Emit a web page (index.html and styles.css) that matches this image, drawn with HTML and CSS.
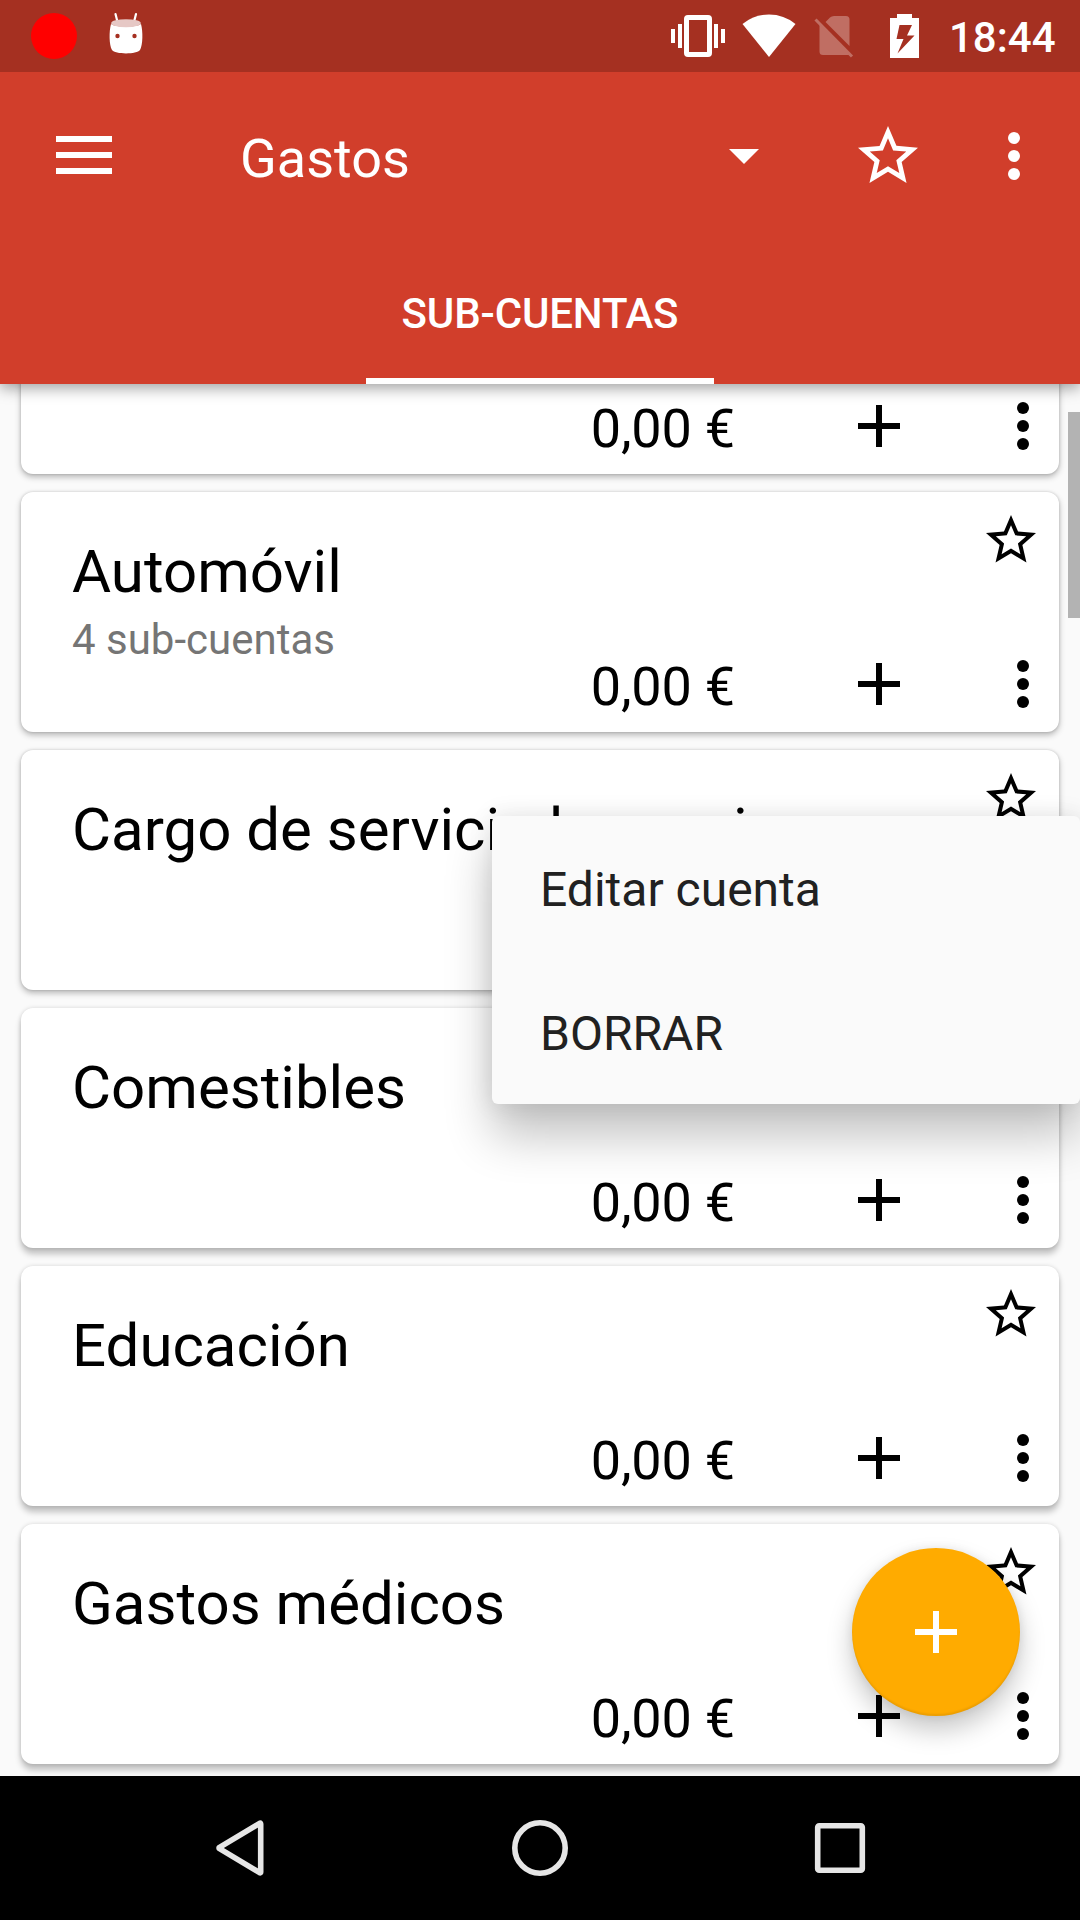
FILE: index.html
```html
<!DOCTYPE html>
<html lang="es">
<head>
<meta charset="utf-8">
<title>Gastos</title>
<link rel="stylesheet" href="styles.css">
</head>
<body>
<svg class="defs" width="0" height="0" aria-hidden="true">
  <symbol id="star" viewBox="0 0 24 24"><path d="M22 9.24l-7.19-.62L12 2 9.19 8.63 2 9.24l5.46 4.73L5.82 21 12 17.27 18.18 21l-1.63-7.03L22 9.24zM12 15.4l-3.76 2.27 1-4.28-3.32-2.88 4.38-.38L12 6.1l1.71 4.04 4.38.38-3.32 2.88 1 4.28L12 15.4z"/></symbol>
  <symbol id="plus" viewBox="0 0 24 24"><path d="M19 13h-6v6h-2v-6H5v-2h6V5h2v6h6v2z"/></symbol>
  <symbol id="more" viewBox="0 0 24 24"><circle cx="12" cy="6" r="2"/><circle cx="12" cy="12" r="2"/><circle cx="12" cy="18" r="2"/></symbol>
</svg>
<div class="screen">
  <header class="header">
    <div class="status">
      <svg class="record" viewBox="0 0 46 46"><circle cx="23" cy="23" r="23"/></svg>
      <svg class="robot" viewBox="0 0 36 44">
        <path d="M7.500 3l2 8M28 3l-2 8" stroke="#fff" stroke-width="2.2" stroke-linecap="round"/>
        <path d="M3 13C1 20 1 34 4 39C7 43.500 29 43.500 32 39C35 34 35 20 33 13C28 16.500 8 16.500 3 13z" fill="#fff"/>
        <ellipse cx="18" cy="12.200" rx="14.800" ry="4" fill="#e6c8c5"/>
        <circle cx="9.500" cy="25" r="2.200" fill="#a53021"/><circle cx="26.500" cy="25" r="2.200" fill="#a53021"/>
      </svg>
      <div class="status-right">
        <svg class="vibrate" viewBox="0 0 54 42" fill="#fff">
          <path d="M0 14h4v14H0zM7 9h4v24H7zM43 9h4v24h-4zM50 14h4v14h-4z"/>
          <path fill-rule="evenodd" d="M17 0h20q4 0 4 4v34q0 4-4 4H17q-4 0-4-4V4q0-4 4-4zM18 5v32h18V5z"/>
        </svg>
        <svg class="wifi" viewBox="0 0 54 44"><path fill="#fff" d="M.5 10Q12 .5 27 .5T53.500 10L27 43z"/></svg>
        <svg class="nosim" viewBox="0 0 40 42"><path fill="#c06e63" d="M11.500 6L16 1.500Q17.500 0 20 0h12q3.500 0 3.500 3.500V30zM5.500 8L36 38.500Q34.500 39 33 39H9q-3.500 0-3.500-3.500z"/><path d="M1.500 3.500L38 40.500" stroke="#c06e63" stroke-width="3"/></svg>
        <svg class="battery" viewBox="0 0 29 44"><path fill="#fff" fill-rule="evenodd" d="M7 0h15v4h7v40H0V4h7zM9.500 11L6.500 25h7L7.500 39.500L24.500 21.500h-7.500L22 11z"/></svg>
        <span class="clock">18:44</span>
      </div>
    </div>
    <div class="toolbar">
      <svg class="burger" viewBox="0 0 56 38" fill="#fff"><path d="M0 0h56v6H0zM0 16h56v6H0zM0 32h56v6H0z"/></svg>
      <h1 class="title">Gastos</h1>
      <svg class="caret" viewBox="0 0 30 15" fill="#fff"><path d="M0 0h30L15 15z"/></svg>
      <svg class="icon tool-star"><use href="#star"/></svg>
      <svg class="icon tool-more"><use href="#more"/></svg>
    </div>
    <div class="tabs"><div class="tab">SUB-CUENTAS</div></div>
  </header>
  <main class="list">
    <article class="card">
      <div class="balance"><span class="amount">0,00 €</span><svg class="icon"><use href="#plus"/></svg><svg class="icon"><use href="#more"/></svg></div>
    </article>
    <article class="card">
      <div class="top"><div><h2 class="name">Automóvil</h2><p class="sub">4 sub-cuentas</p></div><svg class="fav"><use href="#star"/></svg></div>
      <div class="balance"><span class="amount">0,00 €</span><svg class="icon"><use href="#plus"/></svg><svg class="icon"><use href="#more"/></svg></div>
    </article>
    <article class="card">
      <div class="top"><h2 class="name">Cargo de servicio bancario</h2><svg class="fav"><use href="#star"/></svg></div>
    </article>
    <article class="card low">
      <div class="top"><h2 class="name">Comestibles</h2></div>
      <div class="balance"><span class="amount">0,00 €</span><svg class="icon"><use href="#plus"/></svg><svg class="icon"><use href="#more"/></svg></div>
    </article>
    <article class="card low">
      <div class="top"><h2 class="name">Educación</h2><svg class="fav"><use href="#star"/></svg></div>
      <div class="balance"><span class="amount">0,00 €</span><svg class="icon"><use href="#plus"/></svg><svg class="icon"><use href="#more"/></svg></div>
    </article>
    <article class="card low">
      <div class="top"><h2 class="name">Gastos médicos</h2><svg class="fav"><use href="#star"/></svg></div>
      <div class="balance"><span class="amount">0,00 €</span><svg class="icon"><use href="#plus"/></svg><svg class="icon"><use href="#more"/></svg></div>
    </article>
    <div class="scrollbar"></div>
    <div class="menu"><div class="item">Editar cuenta</div><div class="item">BORRAR</div></div>
    <div class="fab"><svg class="icon"><use href="#plus"/></svg></div>
  </main>
  <nav class="nav">
    <svg viewBox="0 0 56 56"><path d="M7.500 27.300L48 3.200Q48.700 3 48.700 4v48q0 1-.7.800L7.500 28.700Q6.500 28 7.500 27.300z"/></svg>
    <svg viewBox="0 0 56 56"><circle cx="28" cy="28" r="25.200"/></svg>
    <svg viewBox="0 0 56 56"><rect x="5.700" y="5.700" width="44.600" height="44.600" rx="1.500"/></svg>
  </nav>
</div>
</body>
</html>
```
FILE: styles.css
```css
* { box-sizing: border-box; margin: 0; padding: 0; }
body { font-family: Roboto, "Noto Sans", sans-serif; background: #fafafa; }
svg { display: block; flex: none; }
.defs { position: absolute; }
.screen { width: 1080px; height: 1920px; display: flex; flex-direction: column; overflow: hidden; }
.icon { width: 72px; height: 72px; fill: currentColor; }

.header { height: 384px; flex: none; background: #d13e2b; color: #fff; position: relative; z-index: 1; box-shadow: 0 4px 14px rgba(0,0,0,.38); }
.status { height: 72px; background: #a53021; display: flex; align-items: flex-start; padding: 0 24px 0 31px; }
.record { width: 46px; height: 46px; margin-top: 13px; fill: #f00; }
.robot { width: 36px; height: 44px; margin: 11px 0 0 31px; }
.status-right { margin-left: auto; display: flex; align-items: flex-start; }
.vibrate { width: 54px; height: 42px; margin-top: 15px; }
.wifi { width: 54px; height: 44px; margin: 14px 0 0 17px; }
.nosim { width: 40px; height: 42px; margin: 16px 0 0 18px; }
.battery { width: 29px; height: 44px; margin: 14px 0 0 36px; }
.clock { font-size: 42px; font-weight: 500; line-height: 48px; margin: 14px 0 0 30px; width: 107px; white-space: nowrap; }

.toolbar { height: 168px; display: flex; align-items: center; padding: 0 30px 0 56px; }
.burger { width: 56px; height: 38px; margin-top: -2px; }
.title { font-size: 54px; font-weight: 400; line-height: 64px; margin: 5px 0 0 128px; width: 489px; }
.caret { width: 30px; height: 15px; }
.tool-star { margin-left: 93px; }
.tool-more { margin-left: 54px; }
.tabs { height: 144px; display: flex; justify-content: center; }
.tab { width: 348px; border-bottom: 6px solid #fff; font-size: 42px; font-weight: 500; line-height: 48px; letter-spacing: -.15px; text-align: center; padding-top: 50px; white-space: nowrap; }

.list { height: 1392px; flex: none; overflow: hidden; position: relative; background: #fafafa; padding: 0 21px; }
.card { height: 240px; background: #fff; border-radius: 12px; margin-bottom: 18px; display: flex; flex-direction: column; box-shadow: 0 3px 6px rgba(0,0,0,.28), 0 0 3px rgba(0,0,0,.16); }
.card:first-child { margin-top: -150px; }
.low { box-shadow: 0 6px 6px rgba(0,0,0,.23), 0 0 4px rgba(0,0,0,.14); }
.top { height: 156px; display: flex; justify-content: space-between; padding: 18px 18px 0 51px; }
.name { font-size: 60px; font-weight: 400; line-height: 70px; margin-top: 27px; white-space: nowrap; }
.sub { font-size: 42px; line-height: 48px; margin-top: 9px; color: #757575; }
.fav { width: 60px; height: 60px; }
.balance { height: 72px; display: flex; align-items: center; justify-content: flex-end; }
.card:first-child .balance { margin-top: 156px; }
.amount { font-size: 54px; line-height: 64px; letter-spacing: -.2px; margin: 6px 108px 0 0; }
.balance .icon + .icon { margin-left: 72px; }

.scrollbar { position: absolute; right: 0; top: 28px; width: 12px; height: 206px; background: #b3b3b3; }
.menu { position: absolute; left: 492px; top: 432px; width: 588px; height: 288px; background: #fafafa; border-radius: 6px; box-shadow: 0 32px 48px rgba(0,0,0,.24), 0 0 24px rgba(0,0,0,.1); color: #212121; }
.item { height: 144px; line-height: 144px; padding: 2px 0 0 48px; font-size: 48px; }
.fab { position: absolute; left: 852px; top: 1164px; width: 168px; height: 168px; border-radius: 50%; background: #ffab00; color: #fff; display: grid; place-items: center; box-shadow: 0 14px 26px rgba(0,0,0,.22), 0 0 10px rgba(0,0,0,.08), inset 0 -2px 2px rgba(0,0,0,.08); }

.nav { height: 144px; flex: none; background: #000; display: flex; align-items: center; justify-content: space-between; padding: 0 212px; }
.nav svg { width: 56px; height: 56px; fill: none; stroke: #e6e6e6; stroke-width: 5.6; stroke-linejoin: round; }
```
